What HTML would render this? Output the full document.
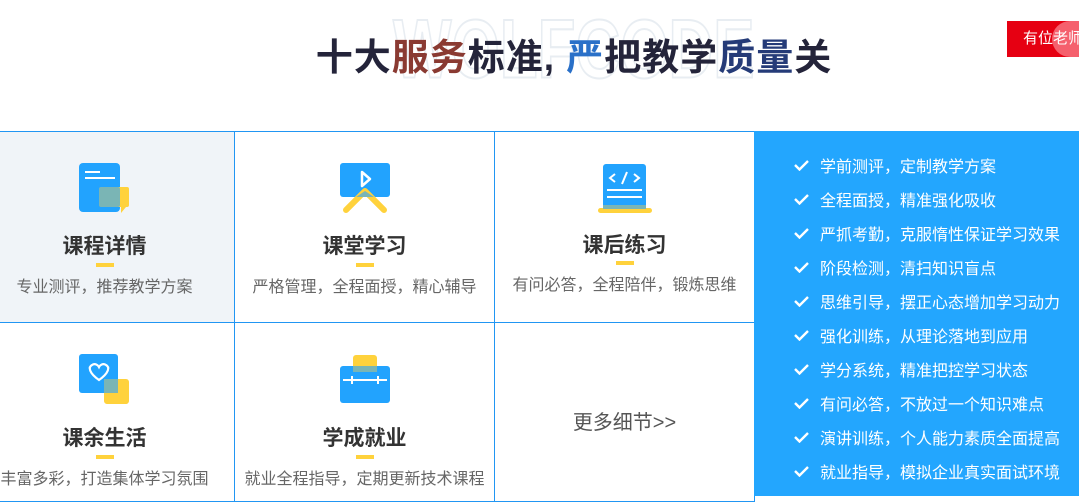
<!DOCTYPE html>
<html><head><meta charset="utf-8"><style>
*{margin:0;padding:0;box-sizing:border-box}
body{width:1079px;height:496px;overflow:hidden;background:#fff;font-family:"Liberation Sans","Noto Sans CJK SC",sans-serif;position:relative}
.abs{position:absolute}
.wm{left:393px;top:2px;width:355px;text-align:center;font:bold 62px "Liberation Sans",sans-serif;color:transparent;-webkit-text-stroke:1.5px #e8edf2;letter-spacing:0px;transform:scale(1,1.35);transform-origin:top center;white-space:nowrap}
.title{left:0;width:1148px;top:27px;text-align:center;font-size:37px;font-weight:bold;color:#24243a;letter-spacing:1px}
.btn{left:1007px;top:21px;width:72px;height:36px;background:#e60012;color:#fff;font-size:15px;line-height:36px;padding-left:16px;white-space:nowrap;overflow:hidden}
.btn i{position:absolute;left:45px;top:0;width:60px;height:36px;border-radius:18px;background:rgba(255,160,170,.6)}
.cell{position:absolute;border:1px solid #2196f3;text-align:center}
.cell h3{position:absolute;left:0;right:0;font-size:21px;font-weight:bold;color:#333}
.cell .bar{position:absolute;left:50%;margin-left:-9px;width:18px;height:4px;background:#ffd23c}
.cell p{position:absolute;left:-30px;right:-30px;font-size:16px;color:#666;white-space:nowrap}
.ic{position:absolute;left:50%;margin-left:-26px}
.panel{left:754px;top:131px;width:325px;height:365px;background:#23a6fe}
.li{position:absolute;left:40px;color:#fff;font-size:16px;white-space:nowrap}
.li svg{position:absolute;left:0;top:6px}
.li span{position:absolute;left:26px;top:0}
</style></head><body>
<div class="abs wm">WOLFCODE</div>
<div class="abs title">十大<span style="color:#8a3a32">服务</span>标准, <span style="color:#2a70c8">严</span>把教学<span style="color:#253b78">质量</span>关</div>
<div class="abs btn"><i></i><span style="position:relative">有位老师</span></div>

<!-- row 1 -->
<div class="cell" style="left:-26px;top:131px;width:261px;height:192px;background:#f0f4f8">
 <svg class="ic" style="top:31px" width="52" height="52" viewBox="0 0 52 52"><rect x="0" y="0" width="41" height="49" rx="4" fill="#22a3fe"/><rect x="6" y="8" width="15" height="2" fill="#fff"/><rect x="6" y="14" width="30" height="2" fill="#fff"/><rect x="25" y="24" width="25" height="20" rx="2" fill="#ffd23c"/><path d="M42 44 L42 50 L47 44Z" fill="#ffd23c"/><rect x="20" y="24" width="21" height="20" rx="2" fill="#7ab5b5"/></svg>
 <h3 style="top:98px">课程详情</h3><div class="bar" style="top:131px"></div><p style="top:141px">专业测评，推荐教学方案</p>
</div>
<div class="cell" style="left:234px;top:131px;width:261px;height:192px">
 <svg class="ic" style="top:31px" width="52" height="52" viewBox="0 0 52 52"><rect x="1" y="0" width="50" height="34" rx="3" fill="#22a3fe"/><path d="M23 9 L31 16 L23 23Z" fill="none" stroke="#fff" stroke-width="2.5" stroke-linejoin="round"/><path d="M7 47 L26 28 L45 47" fill="none" stroke="#ffd23c" stroke-width="6" stroke-linecap="round" stroke-linejoin="round"/><path d="M17 34 L26 28 L35 34Z" fill="#7ab5b5"/></svg>
 <h3 style="top:98px">课堂学习</h3><div class="bar" style="top:131px"></div><p style="top:141px">严格管理，全程面授，精心辅导</p>
</div>
<div class="cell" style="left:494px;top:131px;width:261px;height:192px">
 <svg class="ic" style="top:32px;margin-left:-29px" width="58" height="50" viewBox="0 0 58 50"><rect x="2" y="44" width="54" height="5" rx="2.5" fill="#ffd23c"/><rect x="7" y="0" width="43" height="45" rx="3" fill="#22a3fe"/><rect x="7" y="41" width="43" height="4" fill="#7ab5b5"/><path d="M19 10 L14 14 L19 18 M38 10 L43 14 L38 18 M31 8 L26 20" fill="none" stroke="#fff" stroke-width="2"/><rect x="11" y="25" width="35" height="2" fill="#fff"/><rect x="11" y="32" width="35" height="2" fill="#fff"/></svg>
 <h3 style="top:97px">课后练习</h3><div class="bar" style="top:129px"></div><p style="top:139px">有问必答，全程陪伴，锻炼思维</p>
</div>
<!-- row 2 -->
<div class="cell" style="left:-26px;top:322px;width:261px;height:180px">
 <svg class="ic" style="top:31px" width="52" height="52" viewBox="0 0 52 52"><rect x="0" y="0" width="39" height="39" rx="3" fill="#22a3fe"/><rect x="25" y="25" width="25" height="25" rx="3" fill="#ffd23c"/><rect x="25" y="25" width="14" height="14" fill="#7ab5b5"/><path d="M20 26 C10 19 9 13 13 11 C16 9 19 11 20 13 C21 11 24 9 27 11 C31 13 30 19 20 26Z" fill="none" stroke="#fff" stroke-width="2.2"/></svg>
 <h3 style="top:99px">课余生活</h3><div class="bar" style="top:132px"></div><p style="top:142px">丰富多彩，打造集体学习氛围</p>
</div>
<div class="cell" style="left:234px;top:322px;width:261px;height:180px">
 <svg class="ic" style="top:32px" width="52" height="50" viewBox="0 0 52 50"><rect x="1" y="11" width="50" height="37" rx="3" fill="#22a3fe"/><rect x="14" y="0" width="24" height="17" rx="3" fill="#ffd23c"/><rect x="14" y="11" width="24" height="6" fill="#7ab5b5"/><path d="M4 25 H48 M13 21 V29 M39 21 V29" stroke="#fff" stroke-width="2"/></svg>
 <h3 style="top:99px">学成就业</h3><div class="bar" style="top:132px"></div><p style="top:142px">就业全程指导，定期更新技术课程</p>
</div>
<div class="cell" style="left:494px;top:322px;width:261px;height:180px">
 <div style="position:absolute;left:0;right:0;top:83px;font-size:20px;color:#555">更多细节&gt;&gt;</div>
</div>

<div class="abs panel">
<div class="li" style="top:22px"><svg width="15" height="12"><path d="M1 6 L5.5 10.5 L14 2" fill="none" stroke="#fff" stroke-width="2.4"/></svg><span>学前测评，定制教学方案</span></div>
<div class="li" style="top:56px"><svg width="15" height="12"><path d="M1 6 L5.5 10.5 L14 2" fill="none" stroke="#fff" stroke-width="2.4"/></svg><span>全程面授，精准强化吸收</span></div>
<div class="li" style="top:90px"><svg width="15" height="12"><path d="M1 6 L5.5 10.5 L14 2" fill="none" stroke="#fff" stroke-width="2.4"/></svg><span>严抓考勤，克服惰性保证学习效果</span></div>
<div class="li" style="top:124px"><svg width="15" height="12"><path d="M1 6 L5.5 10.5 L14 2" fill="none" stroke="#fff" stroke-width="2.4"/></svg><span>阶段检测，清扫知识盲点</span></div>
<div class="li" style="top:158px"><svg width="15" height="12"><path d="M1 6 L5.5 10.5 L14 2" fill="none" stroke="#fff" stroke-width="2.4"/></svg><span>思维引导，摆正心态增加学习动力</span></div>
<div class="li" style="top:192px"><svg width="15" height="12"><path d="M1 6 L5.5 10.5 L14 2" fill="none" stroke="#fff" stroke-width="2.4"/></svg><span>强化训练，从理论落地到应用</span></div>
<div class="li" style="top:226px"><svg width="15" height="12"><path d="M1 6 L5.5 10.5 L14 2" fill="none" stroke="#fff" stroke-width="2.4"/></svg><span>学分系统，精准把控学习状态</span></div>
<div class="li" style="top:260px"><svg width="15" height="12"><path d="M1 6 L5.5 10.5 L14 2" fill="none" stroke="#fff" stroke-width="2.4"/></svg><span>有问必答，不放过一个知识难点</span></div>
<div class="li" style="top:294px"><svg width="15" height="12"><path d="M1 6 L5.5 10.5 L14 2" fill="none" stroke="#fff" stroke-width="2.4"/></svg><span>演讲训练，个人能力素质全面提高</span></div>
<div class="li" style="top:328px"><svg width="15" height="12"><path d="M1 6 L5.5 10.5 L14 2" fill="none" stroke="#fff" stroke-width="2.4"/></svg><span>就业指导，模拟企业真实面试环境</span></div>
</div>
</body></html>
